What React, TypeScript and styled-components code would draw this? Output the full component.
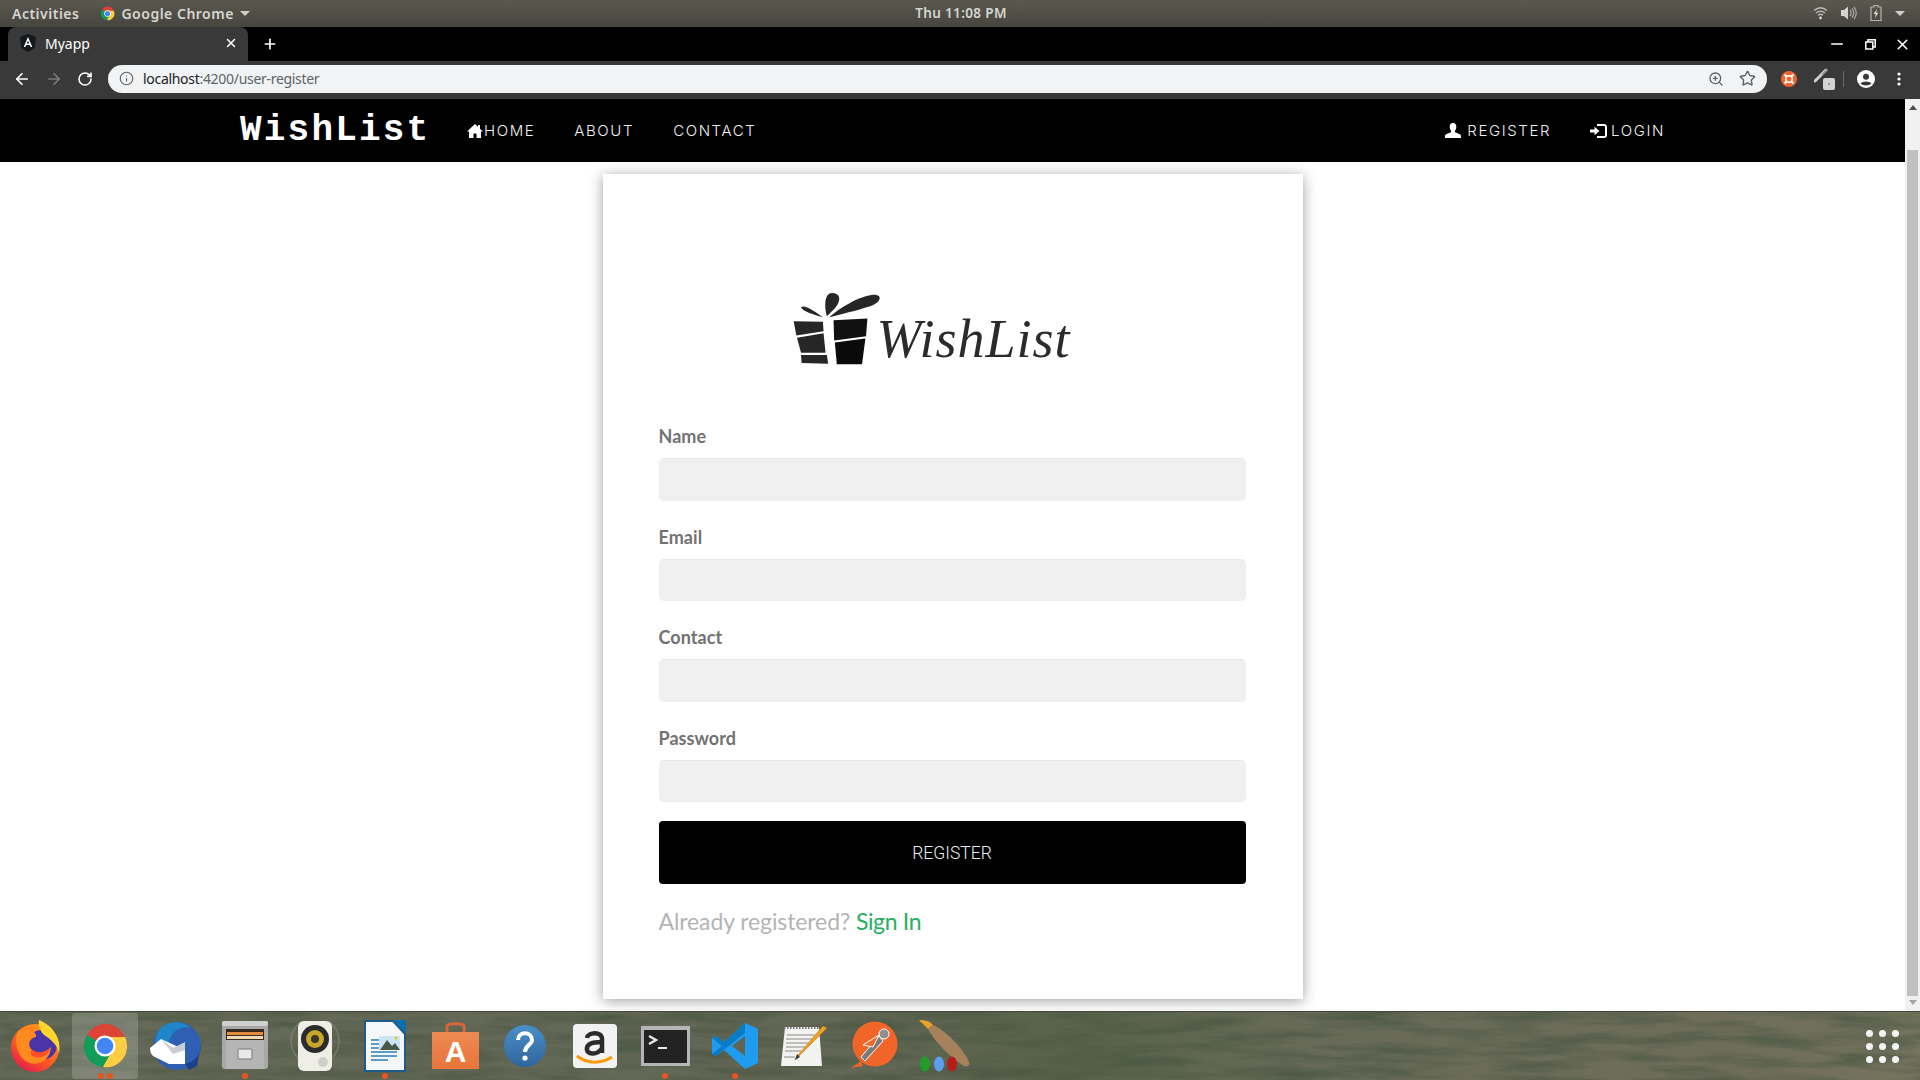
import React from "react";
import styled, { createGlobalStyle } from "styled-components";
import { ArrowLeft, ArrowRight, Info, Minus, Plus, RotateCw, Star, X, ZoomIn } from "lucide-react";

const GlobalStyle = createGlobalStyle`
  html, body { margin: 0; padding: 0; overflow: hidden; background: #fff; }
  * { box-sizing: border-box; }
`;

const Screen = styled.div`
  width: 1920px;
  height: 1080px;
  display: flex;
  flex-direction: column;
  overflow: hidden;
  font-family: "Lato", "Liberation Sans", sans-serif;
`;

/* gnome top bar */
const TopBar = styled.div`
  height: 27px;
  flex: none;
  display: grid;
  grid-template-columns: 1fr auto 1fr;
  align-items: center;
  padding: 0 15px 1px 12px;
  background: linear-gradient(#5b584f, #46453e);
  color: #d6d6d0;
  font: 600 14px "Noto Sans", "Open Sans", sans-serif;
  letter-spacing: 0.5px;
`;

const TopLeft = styled.div`
  display: flex;
  align-items: center;
  gap: 21px;
`;

const AppMenu = styled.div`
  display: flex;
  align-items: center;
  gap: 6px;
`;

const Caret = styled.span`
  width: 0;
  height: 0;
  border-left: 5px solid transparent;
  border-right: 5px solid transparent;
  border-top: 5px solid #d0d0ca;
`;

const Clock = styled.div`
  font-size: 13.5px;
  letter-spacing: 0.35px;
  margin-left: 5px;
`;

const Tray = styled.div`
  display: flex;
  justify-content: flex-end;
  align-items: center;
  gap: 13px;
`;

/* browser tab strip */
const TabStrip = styled.div`
  height: 34px;
  flex: none;
  display: flex;
  align-items: center;
  background: #000;
  color: #fff;
  padding-left: 8px;
`;

const Tab = styled.div`
  width: 240px;
  height: 34px;
  display: flex;
  align-items: center;
  gap: 9px;
  padding: 0 10px 2px 12px;
  background: #393939;
  border-radius: 8px 8px 0 0;
  font: 400 14px "Noto Sans", "Open Sans", sans-serif;
`;

const TabTitle = styled.span`
  flex: 1;
`;

const NewTab = styled.div`
  display: flex;
  margin-left: 14px;
`;

const WindowControls = styled.div`
  margin-left: auto;
  display: flex;
  align-items: center;
  gap: 18.5px;
  padding-right: 9px;
`;

/* browser toolbar */
const ToolBar = styled.div`
  height: 38px;
  flex: none;
  display: flex;
  align-items: center;
  background: #393939;
  padding: 0 0 2px 13px;
  color: #fff;
`;

const NavButtons = styled.div`
  display: flex;
  align-items: center;
  gap: 14px;
  width: 95px;
`;

const AddressBar = styled.div`
  width: 1659px;
  height: 28px;
  flex: none;
  display: flex;
  align-items: center;
  gap: 9px;
  padding: 0 11px 1px 11px;
  background: #f1f3f4;
  border-radius: 14px;
  color: #5f6368;
  font: 400 14px "Noto Sans", "Open Sans", sans-serif;
  letter-spacing: -0.3px;
`;

const Url = styled.div`
  flex: 1;
  b { font-weight: 400; color: #202124; }
`;

const BarIcons = styled.div`
  display: flex;
  align-items: center;
  gap: 15px;
`;

const Extension = styled.div<{ $left: number }>`
  display: flex;
  margin-left: ${(p) => p.$left}px;
`;

const Divider = styled.span`
  width: 1px;
  height: 16px;
  background: #6a6a6a;
`;

/* viewport */
const Viewport = styled.div`
  flex: 1;
  min-height: 0;
  display: flex;
`;

const Page = styled.div`
  flex: 1;
  min-width: 0;
  display: flex;
  flex-direction: column;
  background: #fff;
`;

const Scrollbar = styled.div`
  width: 15px;
  flex: none;
  display: flex;
  flex-direction: column;
  align-items: center;
  background: #f1f1f1;
`;

const ScrollArrow = styled.span<{ $down?: boolean }>`
  width: 0;
  height: 0;
  margin: ${(p) => (p.$down ? "4px 0 0" : "6px 0 0")};
  border-left: 4px solid transparent;
  border-right: 4px solid transparent;
  ${(p) => (p.$down ? "border-top: 5px solid #a3a3a3;" : "border-bottom: 5px solid #505050;")}
`;

const ScrollThumb = styled.div`
  width: 11px;
  height: 846px;
  margin-top: 40px;
  background: #c1c1c1;
`;

const NavBar = styled.nav`
  height: 63px;
  flex: none;
  display: flex;
  align-items: center;
  background: #000;
  padding-left: 240px;
  color: #fff;
`;

const Brand = styled.div`
  font: 700 36px "Liberation Mono", monospace;
  letter-spacing: 2.2px;
  width: 227px;
`;

const NavLinks = styled.div`
  display: flex;
  align-items: center;
  gap: 39px;
`;

const NavLink = styled.a<{ $gap: number }>`
  display: flex;
  align-items: center;
  gap: ${(p) => p.$gap}px;
  font: 300 15px "Inter", "Open Sans", sans-serif;
  letter-spacing: 1.6px;
  color: #f2f2f2;
`;

const NavRight = styled(NavLinks)`
  margin-left: auto;
  padding-right: 240px;
`;

const Body = styled.div`
  flex: 1;
  display: flex;
  justify-content: center;
  padding-top: 12px;
  min-height: 0;
`;

const Card = styled.div`
  width: 700px;
  height: 825px;
  padding: 117px 57px 0 56px;
  background: #fff;
  box-shadow: 0 2px 13px rgba(0, 0, 0, 0.38);
`;

const Logo = styled.div`
  display: flex;
  align-items: flex-end;
  height: 76px;
  margin: 0 0 57px 134px;
`;

const LogoWord = styled.span`
  font: italic 400 54px "Liberation Serif", serif;
  line-height: 42px;
  margin: 0 0 7px -4px;
  color: #2b2b2b;
  letter-spacing: 1px;
  filter: blur(0.4px);
`;

const Field = styled.div`
  margin-bottom: 24px;
`;

const Label = styled.label`
  display: block;
  font: 700 18px/24px "Lato", sans-serif;
  letter-spacing: 0.05px;
  color: #727272;
  margin-bottom: 10px;
`;

const Input = styled.input`
  display: block;
  width: 100%;
  height: 42.5px;
  border: 1px solid #eeeeee;
  border-top-color: #e8e8e8;
  border-radius: 5px;
  background: #f0f0f0;
  outline: none;
`;

const SubmitButton = styled.button`
  display: block;
  width: 100%;
  height: 63px;
  margin-top: -5px;
  border: none;
  border-radius: 4px;
  background: #000;
  color: #e8edf2;
  font: 300 17.5px "Roboto", sans-serif;
`;

const SignInLine = styled.p`
  margin: 22px 0 0;
  font: 400 23px/30px "Lato", sans-serif;
  letter-spacing: -0.1px;
  color: #b4b4b4;
  a { color: #27ae60; letter-spacing: -0.35px; }
`;

/* ubuntu dock */
const Dock = styled.div`
  position: relative;
  height: 69px;
  flex: none;
  display: flex;
  overflow: hidden;
  border-top: 1px solid #44463a;
  background: linear-gradient(90deg, #666a58 0%, #636755 45%, #586249 56%, #686b58 68%, #6e6d5a 90%, #76745f 100%);
`;

const Wallpaper = styled.svg`
  position: absolute;
  inset: 0;
  width: 100%;
  height: 100%;
`;

const DockSlot = styled.div<{ $active?: boolean }>`
  position: relative;
  width: 70px;
  height: 68px;
  display: flex;
  align-items: center;
  justify-content: center;
  &::before {
    content: "";
    position: absolute;
    inset: 1px 2px 1px 2px;
    border-radius: 3px;
    background: ${(p) => (p.$active ? "rgba(255,255,255,0.18)" : "transparent")};
  }
  svg { position: relative; }
`;

const Dots = styled.div`
  position: absolute;
  left: 0;
  right: 0;
  bottom: 1px;
  display: flex;
  justify-content: center;
  gap: 3px;
`;

const Dot = styled.span`
  width: 6px;
  height: 6px;
  border-radius: 50%;
  background: #e95420;
`;

const AppGrid = styled.div`
  position: absolute;
  right: 21px;
  top: 18px;
  display: grid;
  grid-template-columns: repeat(3, 7px);
  gap: 6px;
`;

const GridDot = styled.span`
  width: 7px;
  height: 7px;
  border-radius: 50%;
  background: #f4f4f4;
`;

const ChromeLogo = ({ size }: { size: number }) => (
  <svg width={size} height={size} viewBox="0 0 48 48">
    <path d="M24 24 L6 13 A21 21 0 0 1 44 15 L24 15 Z" fill="#db4437" />
    <path d="M24 24 L6 13 A21 21 0 0 0 22 45 L31 29 Z" fill="#0f9d58" />
    <path d="M24 15 L44 15 A21 21 0 0 1 22 45 L31 29 Z" fill="#ffcd40" />
    <circle cx="24" cy="24" r="10.5" fill="#fff" />
    <circle cx="24" cy="24" r="8.3" fill="#4285f4" />
  </svg>
);

const HomeIcon = () => (
  <svg width="16" height="14" viewBox="0 0 16 14" fill="#fff">
    <path d="M8 0 L11 2.8 V1 H13 V4.7 L16 7.5 H14 V14 H9.5 V9.5 H6.5 V14 H2 V7.5 H0 Z" />
  </svg>
);

const UserIcon = () => (
  <svg width="16" height="15" viewBox="0 0 16 15" fill="#fff">
    <path d="M8 0 C10.5 0 11.5 2 11.3 4.3 C11.1 6.4 10.3 7.5 9.8 8.2 L10 9.3 C12.5 10.2 15.5 11 16 12.5 V15 H0 V12.5 C0.5 11 3.5 10.2 6 9.3 L6.2 8.2 C5.7 7.5 4.9 6.4 4.7 4.3 C4.5 2 5.5 0 8 0 Z" />
  </svg>
);

const LoginIcon = () => (
  <svg width="17" height="14" viewBox="0 0 17 14" fill="#fff">
    <path d="M0 5.4 H4.5 V2.8 L9.5 7 L4.5 11.2 V8.6 H0 Z" />
    <path d="M7 0 H14 C15.7 0 17 1.3 17 3 V11 C17 12.7 15.7 14 14 14 H7 V12 H14 C14.6 12 15 11.6 15 11 V3 C15 2.4 14.6 2 14 2 H7 Z" />
  </svg>
);

const GiftLogo = () => (
  <svg width="88" height="75" viewBox="98 62 265 226" fill="#262626">
    <path d="M100 150 L188 152 L190 180 L108 193 Z" />
    <path d="M110 200 L190 186 L196 245 L122 245 Z" />
    <path d="M122 252 L200 252 L204 278 L124 276 Z" />
    <path d="M220 147 L322 142 L318 195 L222 208 Z" fill="#111" />
    <path d="M224 214 L316 202 L306 280 L230 280 Z" fill="#0a0a0a" />
    <path d="M200 135 C190 100 195 65 215 65 C240 65 245 85 225 110 Z" />
    <path d="M207 138 C250 100 310 70 345 70 C370 72 360 95 330 105 C290 118 240 130 207 138 Z" />
    <path d="M122 108 C130 100 150 110 188 138 C160 130 130 122 122 108 Z" />
  </svg>
);

const AngularIcon = () => (
  <svg width="16" height="18" viewBox="0 0 16 18">
    <path d="M8 0 L16 3 L14.7 14 L8 18 L1.3 14 L0 3 Z" fill="#14171c" />
    <path d="M8 3 L12.3 13 H10.6 L9.8 11 H6.2 L5.4 13 H3.7 Z M8 6.6 L6.8 9.6 H9.2 Z" fill="#fff" />
  </svg>
);

const WifiIcon = () => (
  <svg width="15" height="14" viewBox="0 0 15 14" fill="none" stroke="#bdbdb7" strokeWidth="1.4">
    <path d="M1 4.5 C5 1 10 1 14 4.5" />
    <path d="M3 7 C6 4.5 9 4.5 12 7" />
    <path d="M5 9.3 C6.5 8 8.5 8 10 9.3" />
    <circle cx="7.5" cy="12" r="1.4" fill="#d8d8d2" stroke="none" />
  </svg>
);

const VolumeIcon = () => (
  <svg width="16" height="14" viewBox="0 0 16 14" fill="none">
    <path d="M0 4 H3 L7 0.5 V13.5 L3 10 H0 Z" fill="#d4d4ce" />
    <path d="M9 4 C10.4 5.5 10.4 8.5 9 10 M11 2.5 C13.3 5 13.3 9 11 11.5 M13 1 C16 4.5 16 9.5 13 13" stroke="#a8a8a2" strokeWidth="1.2" />
  </svg>
);

const BatteryIcon = () => (
  <svg width="12" height="16" viewBox="0 0 12 16" fill="none">
    <path d="M4 0.5 H8 V2 H11 V15.5 H1 V2 H4 Z" stroke="#b4b4ae" strokeWidth="1.2" />
    <path d="M7 4 L3.5 9 H5.7 L5 13 L8.5 7.8 H6.3 Z" fill="#d4d4ce" />
  </svg>
);

const RestoreIcon = () => (
  <svg width="11" height="11" viewBox="0 0 11 11" fill="none" stroke="#fff" strokeWidth="1.5">
    <rect x="0.8" y="3" width="7" height="7" />
    <path d="M3 3 V0.8 H10.2 V8 H8" />
  </svg>
);

const UbuntuExtension = () => (
  <svg width="16" height="16" viewBox="0 0 16 16">
    <circle cx="8" cy="8" r="8" fill="#f0652f" />
    <circle cx="8" cy="8" r="3.2" fill="none" stroke="#fff" strokeWidth="1.4" />
    <path d="M3.5 3.5 L5.8 5.8 M12.5 3.5 L10.2 5.8 M3.5 12.5 L5.8 10.2 M12.5 12.5 L10.2 10.2" stroke="#fff" strokeWidth="2" />
  </svg>
);

const PenExtension = () => (
  <svg width="22" height="22" viewBox="0 0 22 22">
    <path d="M1 13 L12 2" stroke="#d0d0d0" strokeWidth="3" strokeLinecap="round" />
    <path d="M8 7 L13 1.5" stroke="#8c8c8c" strokeWidth="1.5" />
    <rect x="9" y="10" width="12" height="12" rx="2" fill="#d4d4d4" />
    <rect x="14" y="15" width="2" height="2" fill="#999" />
  </svg>
);

const ProfileIcon = () => (
  <svg width="18" height="18" viewBox="0 0 18 18">
    <circle cx="9" cy="9" r="9" fill="#fff" />
    <circle cx="9" cy="6.8" r="3" fill="#393939" />
    <path d="M3.5 13.5 C5 10.8 13 10.8 14.5 13.5 C12 16 6 16 3.5 13.5 Z" fill="#393939" />
  </svg>
);

const MenuDots = () => (
  <svg width="4" height="14" viewBox="0 0 4 14" fill="#fff">
    <circle cx="2" cy="2" r="1.6" />
    <circle cx="2" cy="7" r="1.6" />
    <circle cx="2" cy="12" r="1.6" />
  </svg>
);

const FirefoxIcon = () => (
  <svg width="50" height="52" viewBox="0 0 50 52">
    <defs>
      <linearGradient id="ff" x1="0.8" y1="0.1" x2="0.2" y2="1">
        <stop offset="0" stopColor="#ff9a1f" />
        <stop offset="0.55" stopColor="#ff5a22" />
        <stop offset="1" stopColor="#e0184f" />
      </linearGradient>
    </defs>
    <circle cx="25" cy="28" r="24" fill="url(#ff)" />
    <circle cx="32" cy="25" r="15" fill="#4a35a8" />
    <path d="M29 0 C42 5 52 18 49 33 C47 24 40 19 33 14 C30 10 28 5 29 0 Z" fill="#ffd52e" />
    <path d="M8 11 C15 7 27 10 26 17 C20 18 17 24 21 29 C27 35 37 32 41 27 C40 40 29 46 20 43 C9 40 3 24 8 11 Z" fill="#ff8a1e" />
    <path d="M21 29 C27 35 37 32 41 27 C38 37 28 40 21 35 Z" fill="#ff4f28" />
  </svg>
);

const ThunderbirdIcon = () => (
  <svg width="52" height="52" viewBox="0 0 52 52">
    <circle cx="28" cy="26" r="24" fill="#2f5fb3" />
    <path d="M10 10 C18 0 34 0 42 8 C30 6 22 12 20 22 L8 28 C6 22 6 16 10 10 Z" fill="#1f86c9" />
    <path d="M1 28 L12 19 L36 30 L36 44 L20 44 L4 36 C2 34 1 31 1 28 Z" fill="#fff" />
    <path d="M12 19 L24 28 L36 22 L36 30 L24 34 Z" fill="#c9ced6" />
    <path d="M36 44 C46 42 52 34 52 24 L48 46 L40 50 Z" fill="#1e3f8c" />
  </svg>
);

const FilesIcon = () => (
  <svg width="46" height="50" viewBox="0 0 46 50">
    <rect x="0" y="0" width="46" height="48" rx="3" fill="#a8a8a8" />
    <rect x="0" y="0" width="46" height="5" rx="2" fill="#cfcfcf" />
    <rect x="4" y="8" width="38" height="13" fill="#3a2a1c" />
    <rect x="5" y="11" width="36" height="3" fill="#e08b3e" />
    <rect x="5" y="15" width="36" height="3" fill="#f0d9b4" />
    <rect x="4" y="19" width="38" height="29" fill="#b5b5b5" />
    <rect x="16" y="28" width="14" height="10" rx="1" fill="#e8e8e8" stroke="#777" />
  </svg>
);

const SpeakerIcon = () => (
  <svg width="50" height="50" viewBox="0 0 50 50">
    <circle cx="25" cy="20" r="24" fill="none" stroke="#fff" strokeOpacity="0.12" strokeWidth="2" />
    <rect x="8" y="0" width="34" height="50" rx="6" fill="#eeeee6" />
    <circle cx="25" cy="18" r="14" fill="#2b2b2b" />
    <circle cx="25" cy="18" r="9" fill="#c7a72a" />
    <circle cx="25" cy="18" r="4" fill="#3a3a2c" />
    <circle cx="33" cy="41" r="5" fill="#cfcfc8" />
  </svg>
);

const WriterIcon = () => (
  <svg width="42" height="52" viewBox="0 0 42 52">
    <path d="M1 1 H29 L41 14 V51 H1 Z" fill="#f4f6f8" stroke="#1d5b8c" strokeWidth="2" />
    <path d="M29 0 H42 V14 Z" fill="#0f6ea8" />
    <path d="M7 20 H20 M7 24 H20 M7 28 H20 M7 32 H33 M7 36 H33 M7 40 H24" stroke="#5d9cc4" strokeWidth="1.8" />
    <rect x="15" y="16" width="21" height="14" fill="#cfe4f2" />
    <path d="M16 30 L23 20 L28 26 L31 23 L36 30 Z" fill="#4a5a48" />
    <circle cx="32" cy="18" r="1.6" fill="#e8c93a" />
  </svg>
);

const StoreIcon = () => (
  <svg width="47" height="48" viewBox="0 0 47 48">
    <defs>
      <linearGradient id="bag" x1="0" y1="0" x2="0" y2="1">
        <stop offset="0" stopColor="#ec8a52" />
        <stop offset="1" stopColor="#e8753b" />
      </linearGradient>
    </defs>
    <path d="M15 12 V4 C15 1 32 1 32 4 V12" fill="none" stroke="#d9643a" strokeWidth="3" />
    <path d="M0 10 H47 V47 H0 Z" fill="url(#bag)" />
    <text x="23.5" y="40" textAnchor="middle" fontFamily="Liberation Sans, sans-serif" fontWeight="700" fontSize="30" fill="#fff">
      A
    </text>
  </svg>
);

const HelpIcon = () => (
  <svg width="42" height="42" viewBox="0 0 42 42">
    <defs>
      <linearGradient id="help" x1="0" y1="0" x2="0" y2="1">
        <stop offset="0" stopColor="#4a8fc9" />
        <stop offset="1" stopColor="#2f659b" />
      </linearGradient>
    </defs>
    <circle cx="21" cy="21" r="21" fill="url(#help)" />
    <path d="M14 15 C14 6 28 6 28 15 C28 20 21 20 21 27" fill="none" stroke="#fff" strokeWidth="4" />
    <circle cx="21" cy="33" r="2.6" fill="#fff" />
  </svg>
);

const AmazonIcon = () => (
  <svg width="44" height="44" viewBox="0 0 44 44">
    <rect width="44" height="44" rx="4" fill="#f2f2f2" />
    <path d="M14 14 C15 8 29 7 29 15 V29 M29 18 C19 18 13 20 14 26 C15 31 25 31 29 24" fill="none" stroke="#2b2b2b" strokeWidth="4.5" />
    <path d="M4 32 C14 40 28 40 39 33" fill="none" stroke="#f90" strokeWidth="3" />
  </svg>
);

const TerminalIcon = () => (
  <svg width="49" height="40" viewBox="0 0 49 40">
    <rect width="49" height="40" fill="#b5b5b5" />
    <rect x="3" y="4" width="43" height="33" fill="#232323" />
    <path d="M8 10 L15 14 L8 18" fill="none" stroke="#e8e8e8" strokeWidth="2.4" />
    <rect x="17" y="21" width="9" height="2" fill="#e8e8e8" />
  </svg>
);

const VsCodeIcon = () => (
  <svg width="46" height="46" viewBox="0 0 46 46">
    <path d="M33 0 L46 6 V40 L33 46 L12 27 L4 33 L0 31 V15 L4 13 L12 19 Z M33 13 L20 23 L33 33 Z" fill="#1f9cf0" fillRule="evenodd" />
    <path d="M33 0 L12 19 L4 13 L0 15 L10 23 L0 31 L4 33 L33 10 Z" fill="#0065a9" opacity="0.6" />
  </svg>
);

const NotepadIcon = () => (
  <svg width="48" height="44" viewBox="0 0 48 44">
    <path d="M4 3 H38 L41 42 H0 Z" fill="#f2f2f0" />
    <path d="M3 4 H38" stroke="#777" strokeWidth="2" strokeDasharray="1.5 1.5" />
    <path d="M6 11 H34 M5 15 H34 M5 19 H30 M5 23 H26 M4 27 H20 M3 33 H14" stroke="#8a8a8a" strokeWidth="1" />
    <path d="M46 4 L16 34 L14 36 L18 30 L42 2 Z" fill="#f2a11f" stroke="#a96c10" strokeWidth="0.5" />
    <path d="M14 36 L16 30 L19 33 Z" fill="#333" />
  </svg>
);

const PostmanIcon = () => (
  <svg width="48" height="50" viewBox="0 0 48 50">
    <circle cx="24" cy="23" r="22.5" fill="#f26528" />
    <circle cx="33" cy="13" r="5" fill="#8e8e8e" stroke="#fff" />
    <path d="M28 15 L10 36 L14 40 L32 20 Z" fill="#7a7a7a" stroke="#fff" />
    <path d="M12 24 L28 14 L22 26 Z" fill="#f26528" stroke="#fff" />
    <path d="M0 47 L10 40 L12 45 Z" fill="#f26528" />
  </svg>
);

const PaintIcon = () => (
  <svg width="52" height="52" viewBox="0 0 52 52">
    <path d="M0 0 C5 0 11 1 14 5 L9 9 C6 6 3 3 0 0 Z" fill="#e8a426" />
    <path d="M9 9 L14 5 C26 10 44 28 50 42 C51 46 48 47 45 46 C32 38 16 22 9 9 Z" fill="#a5825c" />
    <ellipse cx="6" cy="44" rx="5" ry="7.5" fill="#1f9e2c" />
    <ellipse cx="20" cy="44" rx="5" ry="7.5" fill="#5a9fee" />
    <ellipse cx="33" cy="44" rx="5" ry="7.5" fill="#b51c1c" />
  </svg>
);

const dockApps = [
  { icon: <FirefoxIcon />, dots: 0 },
  { icon: <ChromeLogo size={48} />, dots: 2, active: true },
  { icon: <ThunderbirdIcon />, dots: 0 },
  { icon: <FilesIcon />, dots: 1 },
  { icon: <SpeakerIcon />, dots: 0 },
  { icon: <WriterIcon />, dots: 1 },
  { icon: <StoreIcon />, dots: 0 },
  { icon: <HelpIcon />, dots: 0 },
  { icon: <AmazonIcon />, dots: 0 },
  { icon: <TerminalIcon />, dots: 1 },
  { icon: <VsCodeIcon />, dots: 1 },
  { icon: <NotepadIcon />, dots: 0 },
  { icon: <PostmanIcon />, dots: 0 },
  { icon: <PaintIcon />, dots: 0 },
];

const fields = ["Name", "Email", "Contact", "Password"];

export default function App() {
  return (
    <Screen>
      <GlobalStyle />
      <TopBar>
        <TopLeft>
          Activities
          <AppMenu>
            <ChromeLogo size={15} />
            Google Chrome
            <Caret />
          </AppMenu>
        </TopLeft>
        <Clock>Thu 11:08 PM</Clock>
        <Tray>
          <WifiIcon />
          <VolumeIcon />
          <BatteryIcon />
          <Caret />
        </Tray>
      </TopBar>

      <TabStrip>
        <Tab>
          <AngularIcon />
          <TabTitle>Myapp</TabTitle>
          <X size={14} strokeWidth={2.5} />
        </Tab>
        <NewTab>
          <Plus size={16} strokeWidth={2.5} />
        </NewTab>
        <WindowControls>
          <Minus size={18} strokeWidth={2} />
          <RestoreIcon />
          <X size={17} strokeWidth={2.2} />
        </WindowControls>
      </TabStrip>

      <ToolBar>
        <NavButtons>
          <ArrowLeft size={18} strokeWidth={2.2} />
          <ArrowRight size={18} strokeWidth={2.2} color="#7b7b7b" />
          <RotateCw size={16} strokeWidth={2.4} />
        </NavButtons>
        <AddressBar>
          <Info size={15} strokeWidth={1.8} />
          <Url>
            <b>localhost</b>:4200/user-register
          </Url>
          <BarIcons>
            <ZoomIn size={16} />
            <Star size={17} />
          </BarIcons>
        </AddressBar>
        <Extension $left={14}>
          <UbuntuExtension />
        </Extension>
        <Extension $left={17}>
          <PenExtension />
        </Extension>
        <Extension $left={7}>
          <Divider />
        </Extension>
        <Extension $left={13}>
          <ProfileIcon />
        </Extension>
        <Extension $left={22}>
          <MenuDots />
        </Extension>
      </ToolBar>

      <Viewport>
        <Page>
          <NavBar>
            <Brand>WishList</Brand>
            <NavLinks>
              <NavLink $gap={1}>
                <HomeIcon />
                HOME
              </NavLink>
              <NavLink $gap={0}>ABOUT</NavLink>
              <NavLink $gap={0}>CONTACT</NavLink>
            </NavLinks>
            <NavRight>
              <NavLink $gap={6}>
                <UserIcon />
                REGISTER
              </NavLink>
              <NavLink $gap={4}>
                <LoginIcon />
                LOGIN
              </NavLink>
            </NavRight>
          </NavBar>
          <Body>
            <Card>
              <Logo>
                <GiftLogo />
                <LogoWord>WishList</LogoWord>
              </Logo>
              {fields.map((name) => (
                <Field key={name}>
                  <Label>{name}</Label>
                  <Input />
                </Field>
              ))}
              <SubmitButton>REGISTER</SubmitButton>
              <SignInLine>
                Already registered? <a>Sign In</a>
              </SignInLine>
            </Card>
          </Body>
        </Page>
        <Scrollbar>
          <ScrollArrow />
          <ScrollThumb />
          <ScrollArrow $down />
        </Scrollbar>
      </Viewport>

      <Dock>
        <Wallpaper>
          <filter id="river" colorInterpolationFilters="sRGB">
            <feTurbulence type="fractalNoise" baseFrequency="0.012 0.09" numOctaves="4" seed="7" />
            <feColorMatrix values="0 0 0 0 0.27  0 0 0 0 0.33  0 0 0 0 0.25  1.5 0 0 0 -0.55" />
          </filter>
          <rect width="100%" height="100%" filter="url(#river)" />
        </Wallpaper>
        {dockApps.map((app, i) => (
          <DockSlot key={i} $active={app.active}>
            {app.icon}
            <Dots>
              {Array.from({ length: app.dots }).map((_, d) => (
                <Dot key={d} />
              ))}
            </Dots>
          </DockSlot>
        ))}
        <AppGrid>
          {Array.from({ length: 9 }).map((_, i) => (
            <GridDot key={i} />
          ))}
        </AppGrid>
      </Dock>
    </Screen>
  );
}
